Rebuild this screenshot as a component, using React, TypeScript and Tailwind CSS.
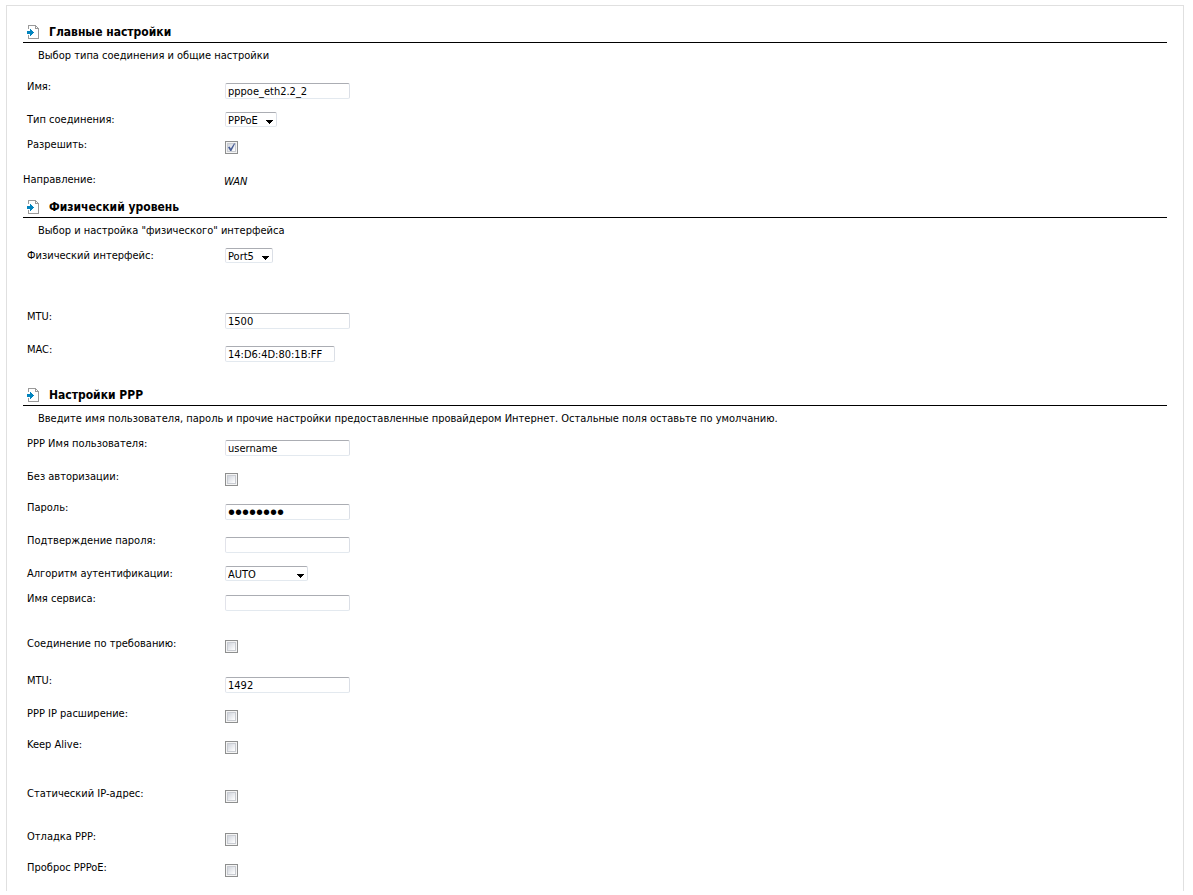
import React from 'react'

const fieldBorder = 'border border-t-[#abadb3] border-r-[#dbdfe6] border-b-[#e3e9ef] border-l-[#e2e3ea] rounded-[2px] bg-white'

function SectionIcon() {
  return (
    <svg className="w-[13px] h-[14px]" viewBox="0 0 13 14" aria-hidden="true" shapeRendering="crispEdges">
      <path d="M1.5 4V.5H8.5L11.5 3.5V13.5H1.5V10" fill="#fff" stroke="#9a9a9a" />
      <path d="M8.5 .5V3.5H11.5" fill="none" stroke="#9a9a9a" />
      <path d="M0 6h3V4h1v1h1v1h1v1h1v1h-1v1h-1v1h-1v1h-1v-2h-3z" fill="#0284be" />
    </svg>
  )
}

function Section({ title, text, children }: { title: string; text: string; children: React.ReactNode }) {
  return (
    <section>
      <h2 className="flex items-center h-[21px] pl-1 gap-[9px] border-b border-black text-[12px] leading-[14px] font-bold">
        <SectionIcon />
        {title}
      </h2>
      <p className="pt-[5px] pb-[9px] pl-[15px]">{text}</p>
      {children}
    </section>
  )
}

function TextRow({ id, label, value = '', type = 'text', width = 'w-[125px]' }: { id: string; label: string; value?: string; type?: string; width?: string }) {
  const font = type === 'password' ? "pt-px font-['Liberation_Sans',sans-serif] text-[20px] leading-[12px]" : 'leading-[14px]'
  return (
    <div className="flex items-start h-[33px] pl-1">
      <label htmlFor={id} className="w-[198px]">{label}</label>
      <input id={id} type={type} defaultValue={value} className={`mt-1 h-4 px-[2px] outline-none ${font} ${fieldBorder} ${width}`} />
    </div>
  )
}

function SelectRow({ id, label, options, width }: { id: string; label: string; options: string[]; width: string }) {
  return (
    <div className="flex items-start h-[25px] pl-1">
      <label htmlFor={id} className="w-[198px]">{label}</label>
      <div className={`relative ${width}`}>
        <select id={id} className={`block appearance-none w-full h-[15px] pt-[2px] px-[2px] leading-[12px] outline-none ${fieldBorder}`}>
          {options.map((o) => <option key={o}>{o}</option>)}
        </select>
        <svg className="absolute right-1 top-2 w-[7px] h-1 pointer-events-none" viewBox="0 0 7 4" aria-hidden="true" shapeRendering="crispEdges">
          <path d="M0 0h7v1h-1v1h-1v1h-1v1h-1v-1h-1v-1h-1v-1h-1z" />
        </svg>
      </div>
    </div>
  )
}

function CheckRow({ id, label, checked = false }: { id: string; label: string; checked?: boolean }) {
  return (
    <div className="flex items-start h-[31px] pl-1">
      <label htmlFor={id} className="w-[198px]">{label}</label>
      <div className="relative mt-1 size-[13px]">
        <input
          id={id}
          type="checkbox"
          defaultChecked={checked}
          className="peer block appearance-none size-[13px] border border-[#8e8f8f] bg-linear-to-br from-[#c3c8d2] to-white to-80% shadow-[inset_0_0_0_1px_#f4f4f4,inset_0_0_0_2px_#c9ccd2]"
        />
        <svg className="absolute inset-0 hidden peer-checked:block pointer-events-none" viewBox="0 0 13 13" aria-hidden="true">
          <path d="M3 6.2L4.6 5.4L5.8 7.6L9 2.4L10.2 2.6L6.4 10H5.2Z" fill="#4a5f97" />
        </svg>
      </div>
    </div>
  )
}

export default function App() {
  return (
    <main className="mt-[5px] ml-[6px] mr-[9px] pt-4 px-4 border border-b-0 border-[#e0e0e0] font-['DejaVu_Sans_Condensed','DejaVu_Sans',sans-serif] text-[11px] leading-[16px] text-black">
      <form>
        <Section title="Главные настройки" text="Выбор типа соединения и общие настройки">
          <div className="pt-[6px] pb-1">
            <TextRow id="name" label="Имя:" value="pppoe_eth2.2_2" />
            <SelectRow id="type" label="Тип соединения:" options={['PPPoE', 'PPTP', 'L2TP']} width="w-[52px]" />
            <CheckRow id="enable" label="Разрешить:" checked />
          </div>
          <div className="flex h-[25px]">
            <span className="w-[201px]">Направление:</span>
            <em className="pt-[2px]">WAN</em>
          </div>
        </Section>

        <Section title="Физический уровень" text={'Выбор и настройка "физического" интерфейса'}>
          <SelectRow id="port" label="Физический интерфейс:" options={['Port5', 'Port4']} width="w-[48px]" />
          <div className="pt-9 pb-[10px]">
            <TextRow id="mtu" label="MTU:" value="1500" />
            <TextRow id="mac" label="MAC:" value="14:D6:4D:80:1B:FF" width="w-[110px]" />
          </div>
        </Section>

        <Section title="Настройки PPP" text="Введите имя пользователя, пароль и прочие настройки предоставленные провайдером Интернет. Остальные поля оставьте по умолчанию.">
          <TextRow id="user" label="PPP Имя пользователя:" value="username" />
          <CheckRow id="noauth" label="Без авторизации:" />
          <TextRow id="pass" label="Пароль:" type="password" value="password" />
          <TextRow id="pass2" label="Подтверждение пароля:" type="password" />
          <SelectRow id="auth" label="Алгоритм аутентификации:" options={['AUTO', 'PAP', 'CHAP']} width="w-[83px]" />
          <TextRow id="service" label="Имя сервиса:" />
          <div className="pt-3 pb-[6px]">
            <CheckRow id="ondemand" label="Соединение по требованию:" />
          </div>
          <TextRow id="pppmtu" label="MTU:" value="1492" />
          <CheckRow id="pppip" label="PPP IP расширение:" />
          <CheckRow id="keepalive" label="Keep Alive:" />
          <div className="pt-[18px] pb-3">
            <CheckRow id="staticip" label="Статический IP-адрес:" />
          </div>
          <CheckRow id="debug" label="Отладка PPP:" />
          <CheckRow id="passthrough" label="Проброс PPPoE:" />
        </Section>
      </form>
    </main>
  )
}
